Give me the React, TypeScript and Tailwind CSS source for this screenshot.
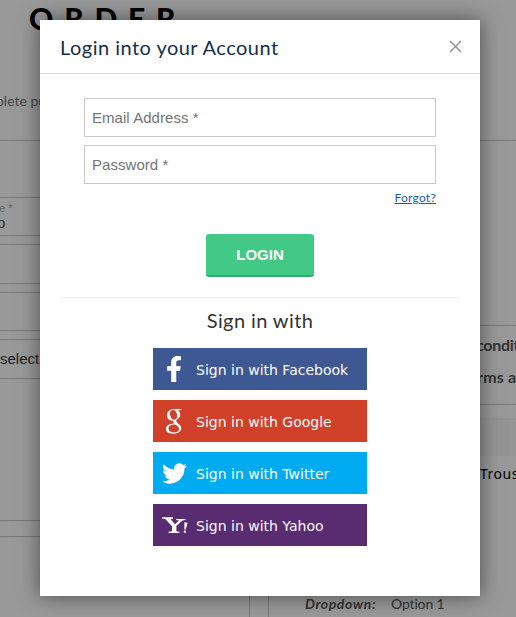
import React from "react";
import { FaFacebookF, FaTwitter } from "react-icons/fa";

function GoogleMark() {
  return (
    <svg width="18" height="26" viewBox="0 0 18 26" className="mr-[2px] shrink-0">
      <path
        fill="#fff"
        fillRule="evenodd"
        d="M9.5 1H17L15.2 2.3H13C14.5 3.4 15.2 4.8 15.2 6.6C15.2 8.7 14.2 10 12.8 11.1C11.6 12 11.2 12.5 11.2 13.1C11.2 13.9 12.1 14.5 13.2 15.4C15.1 16.8 16.2 18.1 16.2 20.2C16.2 23.3 13 25.7 8 25.7C3.5 25.7.9 23.8.9 21C.9 17.8 4.2 15.8 9.1 15.6C8.4 14.8 8.1 14 8.4 12.8C4.5 13.1 1.9 10.6 1.9 7.3C1.9 3.8 5 1 9.5 1ZM8 2C5.8 2 4.7 3.7 5 6.4C5.3 9.4 7 11.7 9.2 11.7C11.4 11.7 12.5 9.8 12.1 7.1C11.7 4.1 10.2 2 8 2ZM10.1 16.5C6.1 16.5 3.5 17.9 3.5 20.5C3.5 22.9 5.6 24.4 8.9 24.4C12.2 24.4 14 23 14 20.9C14 18.9 12.4 18 10.1 16.5Z"
      />
    </svg>
  );
}

function YahooMark() {
  return (
    <svg width="26" height="17" viewBox="0 0 26 17" className="shrink-0">
      <path
        fill="#fff"
        d="M0 .3H11V1.7L8.5 2L13 7.2L17 3.5L14.2 3V2H23.5V3.1L20.5 3.6L14.4 9V14.2L17.5 14.7V16H6.6V14.7L10 14.2V9.3L3.2 2.1L0 1.6Z"
      />
      <path fill="#fff" d="M22.4 5.2L25.6 5.8L23.7 12.4H22.4ZM21.8 13.6H24V15.8H21.8Z" />
    </svg>
  );
}

const providers = [
  { name: "Facebook", color: "bg-[#3e5894]", icon: <FaFacebookF color="#fff" size={26} className="mr-[2px]" /> },
  { name: "Google", color: "bg-[#d1412a]", icon: <GoogleMark /> },
  { name: "Twitter", color: "bg-[#00abf1]", icon: <FaTwitter color="#fff" size={25} /> },
  { name: "Yahoo", color: "bg-[#592b71]", icon: <YahooMark /> },
];

function OrderPage() {
  return (
    <div className="h-full overflow-hidden bg-white">
      <div className="h-[92px] overflow-hidden pl-[29px] text-[30px] leading-[36px] font-black tracking-[10.8px] text-black">ORDER</div>
      <div className="-ml-[4px] h-12 text-[14px] leading-[18px] text-[#777]">plete pu</div>
      <div className="flex gap-[18px]">
        <div className="w-[250px] shrink-0">
          <div className="h-[381px] border-y border-r border-[#c8c8c8] pt-14">
            <div className="mb-2 h-[39px] w-[230px] border border-l-0 border-[#c8c8c8] pt-1 font-['Liberation_Sans',sans-serif]">
              <div className="-ml-px text-[11px] leading-[13px] text-[#aaa]">e *</div>
              <div className="-ml-[3px] text-[15px] leading-[15px] text-[#555]">p</div>
            </div>
            <div className="mb-2 h-10 w-[230px] border border-l-0 border-[#c8c8c8]" />
            <div className="mb-2 h-[39px] w-[230px] border border-l-0 border-[#c8c8c8]" />
            <div className="h-10 w-[230px] border border-l-0 border-[#c8c8c8] font-['Liberation_Sans',sans-serif] text-[15px] leading-[37px] text-[#333]">select</div>
          </div>
          <div className="mt-[15px] h-[90px] border-t border-r border-[#c8c8c8]" />
        </div>
        <div className="h-[500px] w-[270px] shrink-0 border-t border-l border-[#c8c8c8] pt-[184px]">
          <div className="h-20 border-y border-[#c8c8c8] pt-[3px] pl-[209px] text-[16px] leading-8 font-bold whitespace-nowrap text-[#555]">
            <div className="-ml-[2px] tracking-[-0.3px]">condit</div>
            <div className="-ml-px tracking-[0.2px]">rms a</div>
          </div>
          <div className="mt-[13px] h-[38px] bg-[#f7f7f7]" />
          <div className="pl-[211px] font-['Noto_Sans',sans-serif] text-[14px] leading-9 tracking-[0.5px] text-black">Trous</div>
          <div className="mt-[102px] flex pl-9 text-[14px] leading-5 text-[#555]">
            <b className="w-[86px] tracking-[0.6px] italic">Dropdown:</b>
            <span className="tracking-[-0.15px]">Option 1</span>
          </div>
        </div>
      </div>
    </div>
  );
}

export default function App() {
  return (
    <div className="relative h-[617px] w-[516px] overflow-hidden font-['Lato',sans-serif]">
      <OrderPage />
      <div className="absolute inset-0 flex bg-black/40 pt-5 pl-10">
        <div className="h-[576px] w-[440px] shrink-0 bg-white shadow-[0_0_20px_rgba(0,0,0,0.5)]">
          <header className="flex h-[54px] items-center justify-between border-b border-[#d9d9d9] pr-[18px] pl-5">
            <h1 className="pt-px text-[20px] tracking-[0.47px] text-[#15304a]">Login into your Account</h1>
            <svg width="13" height="13" viewBox="0 0 13 13" stroke="#949494" strokeWidth="1.5">
              <path d="M1 1L12 12M12 1L1 12" />
            </svg>
          </header>
          <div className="px-11 pt-6">
            <div className="flex flex-col gap-2 font-['Liberation_Sans',sans-serif] text-[15px]">
              <input placeholder="Email Address *" className="h-[39px] border border-[#c8c8c8] px-[7px] tracking-[0.05px] placeholder:text-[#757575]" />
              <input placeholder="Password *" type="password" className="h-[39px] border border-[#c8c8c8] px-[7px] tracking-[0.05px] placeholder:text-[#757575]" />
            </div>
            <div className="mt-[5px] text-right text-[12px] leading-[18px] tracking-[0.25px] text-[#1d5bab] underline">Forgot?</div>
            <button className="mx-auto mt-[27px] block h-[43px] w-[108px] rounded-[3px] border-b-2 border-[#35a86c] bg-[#42c985] pt-[2px] font-['Liberation_Sans',sans-serif] text-[15px] font-bold text-white">LOGIN</button>
          </div>
          <div className="mx-5 mt-5 flex flex-col items-center border-t border-[#ececec]">
            <h2 className="pt-[7px] text-[20px] leading-[30px] tracking-[0.4px] text-[#333]">Sign in with</h2>
            <div className="mt-[13px] flex w-[214px] flex-col gap-[10px]">
              {providers.map((p) => (
                <div key={p.name} className={`flex h-[42px] items-center text-white ${p.color}`}>
                  <div className="flex w-[43px] items-center justify-center">{p.icon}</div>
                  <span className="pt-[2px] font-['DejaVu_Sans',sans-serif] text-[14px]">Sign in with {p.name}</span>
                </div>
              ))}
            </div>
          </div>
        </div>
      </div>
    </div>
  );
}
